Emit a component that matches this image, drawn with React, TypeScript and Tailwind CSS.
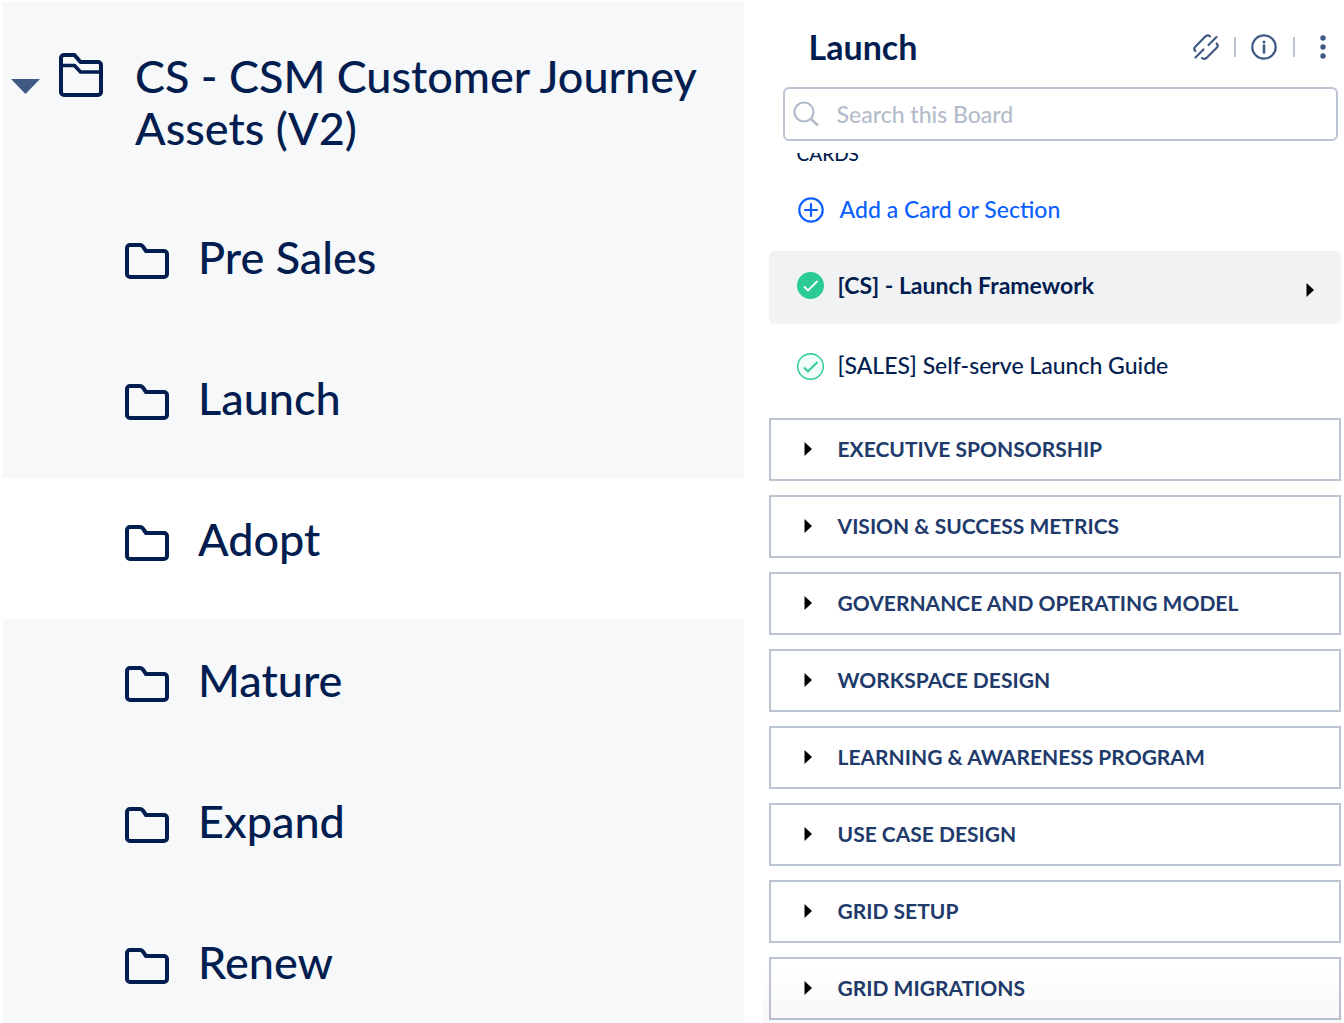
import React from 'react';

interface FolderItem {
  name: string;
  active?: boolean;
}

const folders: FolderItem[] = [
  { name: 'Pre Sales' },
  { name: 'Launch' },
  { name: 'Adopt', active: true },
  { name: 'Mature' },
  { name: 'Expand' },
  { name: 'Renew' },
];

const sections: string[] = [
  'EXECUTIVE SPONSORSHIP',
  'VISION & SUCCESS METRICS',
  'GOVERNANCE AND OPERATING MODEL',
  'WORKSPACE DESIGN',
  'LEARNING & AWARENESS PROGRAM',
  'USE CASE DESIGN',
  'GRID SETUP',
  'GRID MIGRATIONS',
];

const FolderIcon = () => (
  <svg className="w-11 h-9 shrink-0" viewBox="0 0 44 36" fill="none" stroke="currentColor" strokeWidth="4" strokeLinejoin="round">
    <path d="M5 2h10c1.200 0 2 .4 2.800 1.300L21 8H39a3 3 0 0 1 3 3V31a3 3 0 0 1-3 3H5a3 3 0 0 1-3-3V5A3 3 0 0 1 5 2Z" />
  </svg>
);

const OpenFolderIcon = () => (
  <svg className="w-11 h-11 shrink-0" viewBox="0 0 44 44" fill="none" stroke="currentColor" strokeWidth="4" strokeLinejoin="round">
    <path d="M5 2h10.500L21.500 9H39a3 3 0 0 1 3 3V39a3 3 0 0 1-3 3H5a3 3 0 0 1-3-3V5A3 3 0 0 1 5 2Z" />
    <path d="M2 12.500h13.500L21.500 19H42" strokeWidth="3.500" />
  </svg>
);

const ArrowIcon = () => (
  <svg className="w-2 h-[14px] shrink-0" viewBox="0 0 8 14" fill="#000000">
    <path d="M0.500 0 8 7 0.500 14Z" />
  </svg>
);

const LinkIcon = () => (
  <svg className="w-[26px] h-[26px]" viewBox="0 0 26 26" fill="none" stroke="currentColor" strokeWidth="2.200" strokeLinecap="round" strokeLinejoin="round">
    <path d="M2.300 17C1 15.500 1 14 2.300 12.700L12 2.800C13.500 1.300 15.500 1.200 17 2.300" />
    <path d="M15.500 11 23.500 3" />
    <path d="M2.500 23.500 10.500 15.500" />
    <path d="M23.700 9.500C25 11 25 12.500 23.700 13.800L14 23.500C12.500 25 10.500 25.200 9 24" />
  </svg>
);

const InfoIcon = () => (
  <svg className="w-[26px] h-[26px]" viewBox="0 0 26 26" fill="none" stroke="currentColor" strokeWidth="2.200">
    <circle cx="13" cy="13" r="11.700" />
    <path d="M13 11.500v7" strokeLinecap="round" strokeWidth="2.600" />
    <circle cx="13" cy="8" r="1.500" fill="currentColor" stroke="none" />
  </svg>
);

const DotsIcon = () => (
  <svg className="w-6 h-6" viewBox="0 0 24 24" fill="currentColor">
    <circle cx="12" cy="3" r="2.700" />
    <circle cx="12" cy="12" r="2.700" />
    <circle cx="12" cy="21" r="2.700" />
  </svg>
);

const SearchIcon = () => (
  <svg className="w-[26px] h-[26px] shrink-0" viewBox="0 0 26 26" fill="none" stroke="#b4bccb" strokeWidth="2.200">
    <circle cx="11" cy="11" r="9.500" />
    <path d="M17.500 17.500 25 24.500" strokeWidth="2.600" />
  </svg>
);

const PlusIcon = () => (
  <svg className="w-[26px] h-[26px] shrink-0" viewBox="0 0 26 26" fill="none" stroke="currentColor" strokeWidth="2.200">
    <circle cx="13" cy="13" r="11.700" />
    <path d="M13 7v12M7 13h12" strokeLinecap="round" />
  </svg>
);

interface CheckIconProps {
  filled?: boolean;
}

const CheckIcon: React.FC<CheckIconProps> = ({ filled }) => (
  <svg className="w-[27px] h-[27px] shrink-0" viewBox="0 0 27 27" fill="none">
    <circle cx="13.500" cy="13.500" r="12.800" fill={filled ? '#2acb96' : '#f1fdf9'} stroke="#2acb96" strokeWidth="1.400" />
    <path d="M7 14.500 11 18.500 20.500 9" stroke={filled ? '#ffffff' : '#2acb96'} strokeWidth="1.800" />
  </svg>
);

const FolderTree = () => {
  return (
    <nav aria-label="Folders" className="bg-[#f7f8fa] overflow-hidden text-[#021d4f] text-[45px] leading-[52px] font-medium">
      <button className="flex w-full items-start text-left h-[194px] pt-12 pl-[5px]">
        <svg className="w-8 h-4 mt-7 shrink-0" viewBox="0 0 32 16" fill="#405884">
          <path d="M3 1H32L17.500 16Z" />
        </svg>
        <span className="ml-[19px] mt-[3px]">
          <OpenFolderIcon />
        </span>
        <span className="ml-8">
          CS - CSM Customer Journey
          <br />
          Assets (V2)
        </span>
      </button>
      {folders.map((folder) => (
        <button
          key={folder.name}
          className={`flex w-full items-start text-left h-[141px] pt-[35px] pl-[122px] ${folder.active ? 'bg-white' : ''}`}
        >
          <span className="mt-3">
            <FolderIcon />
          </span>
          <span className="ml-[29px]">{folder.name}</span>
        </button>
      ))}
    </nav>
  );
};

const BoardHeader = () => {
  return (
    <header>
      <div className="flex items-center justify-between pt-[23px] pl-[46px] pr-[7px] text-[#405884]">
        <h1 className="text-[34px] leading-[44px] font-bold text-[#021d4f]">Launch</h1>
        <div className="flex items-center">
          <button aria-label="Copy link">
            <LinkIcon />
          </button>
          <span className="w-[2px] h-5 mx-[15px] bg-[#bdc4d2]" />
          <button aria-label="Board info">
            <InfoIcon />
          </button>
          <span className="w-[2px] h-5 mx-4 bg-[#bdc4d2]" />
          <button aria-label="More options">
            <DotsIcon />
          </button>
        </div>
      </div>
      <label className="flex items-center h-[54px] mt-[18px] ml-5 mr-1 pl-2 border-2 border-[#bdc4d2] rounded-md">
        <SearchIcon />
        <input
          type="text"
          aria-label="Search this Board"
          placeholder="Search this Board"
          className="flex-1 min-w-0 ml-[18px] text-[23px] leading-8 font-medium outline-none placeholder:text-[#b4bccb] placeholder:opacity-100"
        />
      </label>
    </header>
  );
};

const CardList = () => {
  return (
    <div className="flex-1 min-h-0 overflow-hidden mt-3 pl-[6px] pr-[1px] text-[23px] leading-8 text-[#021d4f]">
      <div className="flex items-end h-[9px] pl-7 overflow-hidden">
        <h2 className="text-[19px] leading-4 font-medium shrink-0">CARDS</h2>
      </div>
      <button className="flex items-center h-12 mt-6 pl-[29px] font-medium text-[#0b5fff]">
        <PlusIcon />
        <span className="ml-4 pb-[2px]">Add a Card or Section</span>
      </button>
      <button className="flex items-center w-full h-[73px] mt-[17px] pl-7 pr-[27px] pb-1 rounded-md bg-[#f1f2f4] font-bold text-left">
        <CheckIcon filled />
        <span className="flex-1 ml-[14px] pb-[2px]">[CS] - Launch Framework</span>
        <span className="pt-2">
          <ArrowIcon />
        </span>
      </button>
      <button className="flex items-center w-full h-[84px] pl-7 font-medium text-left">
        <CheckIcon />
        <span className="ml-[14px] pb-[2px]">[SALES] Self-serve Launch Guide</span>
      </button>
      <div className="mt-[10px] space-y-[14px]">
        {sections.map((section) => (
          <button
            key={section}
            className="flex items-center w-full h-[63px] pl-[33px] pb-[2px] border-2 border-[#bdc4d2] text-left text-[21px] font-bold text-[#203a6b]"
          >
            <ArrowIcon />
            <span className="ml-[26px]">{section}</span>
          </button>
        ))}
      </div>
    </div>
  );
};

const App = () => {
  return (
    <div className="grid grid-cols-[740fr_579fr] gap-[19px] h-screen pt-[2px] pr-[2px] pl-[3px] bg-white font-['Lato',sans-serif]">
      <FolderTree />
      <main className="relative flex flex-col min-h-0">
        <BoardHeader />
        <CardList />
        <div className="absolute inset-x-0 bottom-0 h-14 pointer-events-none bg-linear-to-b from-transparent to-black/3" />
      </main>
    </div>
  );
};

export default App;
